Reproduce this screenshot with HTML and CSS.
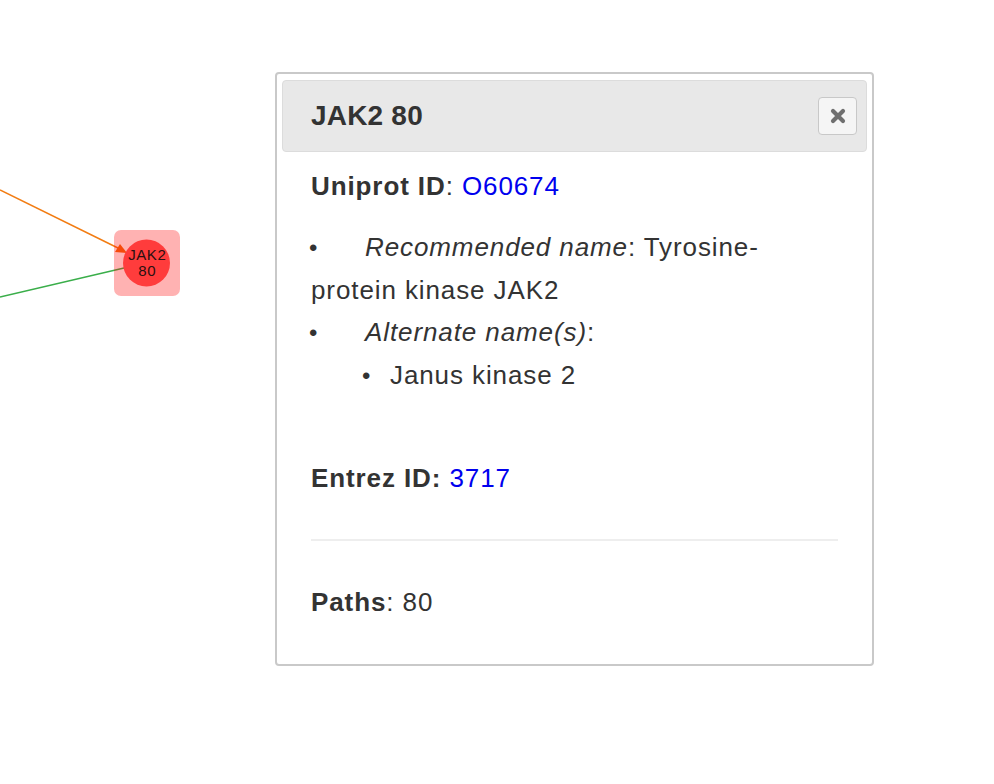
FILE: index.html
```html
<!DOCTYPE html>
<html>
<head>
<meta charset="utf-8">
<link rel="stylesheet" href="styles.css">
</head>
<body>
<div class="canvas">
  <svg class="graph" width="994" height="784" viewBox="0 0 994 784">
    <line x1="0" y1="190" x2="120" y2="249" stroke="#f27c12" stroke-width="1.5"/>
    <polygon points="127,253 115,252 120,244" fill="#f26a0f"/>
    <line x1="0" y1="297" x2="124" y2="268" stroke="#3aae4a" stroke-width="1.5"/>
    <rect x="114" y="230" width="66" height="66" rx="7" fill="rgba(255,0,0,0.3)"/>
    <circle cx="146.5" cy="263" r="23.5" fill="#ff3c3c"/>
    <text x="147.3" y="259.5" class="node-label">JAK2</text>
    <text x="147.3" y="275.5" class="node-label">80</text>
  </svg>

  <div class="panel">
    <div class="panel-head">
      <h3 class="panel-title">JAK2 80</h3>
      <button class="close-btn" aria-label="close">
        <svg width="16" height="16" viewBox="0 0 16 16">
          <path d="M3 3 L13 13 M13 3 L3 13" stroke="#6f6f6f" stroke-width="4.2" stroke-linecap="round"/>
        </svg>
      </button>
    </div>
    <div class="panel-body">
      <p class="line uniprot"><b>Uniprot ID</b>: <a class="link">O60674</a></p>
      <ul class="names">
        <li class="item"><i>Recommended name</i>: Tyrosine-protein kinase JAK2</li>
        <li class="item"><i>Alternate name(s)</i>:
          <ul class="sub">
            <li class="subitem">Janus kinase 2</li>
          </ul>
        </li>
      </ul>
      <p class="line entrez"><b>Entrez ID: </b><a class="link">3717</a></p>
      <hr class="divider">
      <p class="line paths"><b>Paths</b>: 80</p>
    </div>
  </div>
</div>
</body>
</html>
```

FILE: styles.css
```css
html, body {
  margin: 0;
  padding: 0;
  background: #ffffff;
}

body {
  font-family: "Liberation Sans", Arial, Helvetica, sans-serif;
  color: #333333;
}

.canvas {
  position: relative;
  width: 994px;
  height: 784px;
  overflow: hidden;
}

.graph {
  position: absolute;
  left: 0;
  top: 0;
}

.node-label {
  font-family: "Liberation Sans", Arial, sans-serif;
  font-size: 15px;
  letter-spacing: 0.6px;
  fill: #2a1010;
  text-anchor: middle;
}

.panel {
  position: absolute;
  left: 275px;
  top: 72px;
  width: 585px;
  height: 584px;
  border: 2px solid #c9c9c9;
  border-radius: 4px;
  background: #ffffff;
  padding: 6px 5px 0 5px;
}

.panel-head {
  display: flex;
  align-items: center;
  justify-content: space-between;
  height: 70px;
  background: #e8e8e8;
  border: 1px solid #dcdcdc;
  border-radius: 4px;
  padding: 0 9px 0 28px;
}

.panel-title {
  margin: 0;
  font-size: 28px;
  font-weight: bold;
  color: #333333;
  letter-spacing: 0.2px;
}

.close-btn {
  width: 39px;
  height: 38px;
  display: flex;
  align-items: center;
  justify-content: center;
  padding: 0;
  background: #f5f5f5;
  border: 1px solid #c8c8c8;
  border-radius: 4px;
}

.panel-body {
  padding: 0 29px;
  font-size: 26px;
  letter-spacing: 0.9px;
}

.line {
  margin: 0;
  line-height: 34px;
}

.uniprot {
  margin-top: 17px;
}

.link {
  color: #0000ee;
  text-decoration: none;
}

.names {
  list-style: none;
  margin: 23px 0 0 0;
  padding: 0;
  line-height: 42px;
}

.item::before {
  content: "\2022";
  display: inline-block;
  width: 56px;
  margin-left: -2px;
  letter-spacing: 0;
  font-size: 24px;
}

.sub {
  list-style: none;
  margin: 0;
  padding: 0 0 0 51px;
}

.subitem::before {
  content: "\2022";
  display: inline-block;
  width: 28px;
  letter-spacing: 0;
  font-size: 24px;
}

.entrez {
  margin-top: 64px;
}

.divider {
  margin: 44px 0 0 0;
  border: 0;
  border-top: 2px solid #eeeeee;
  height: 0;
}

.paths {
  margin-top: 44px;
}
```
